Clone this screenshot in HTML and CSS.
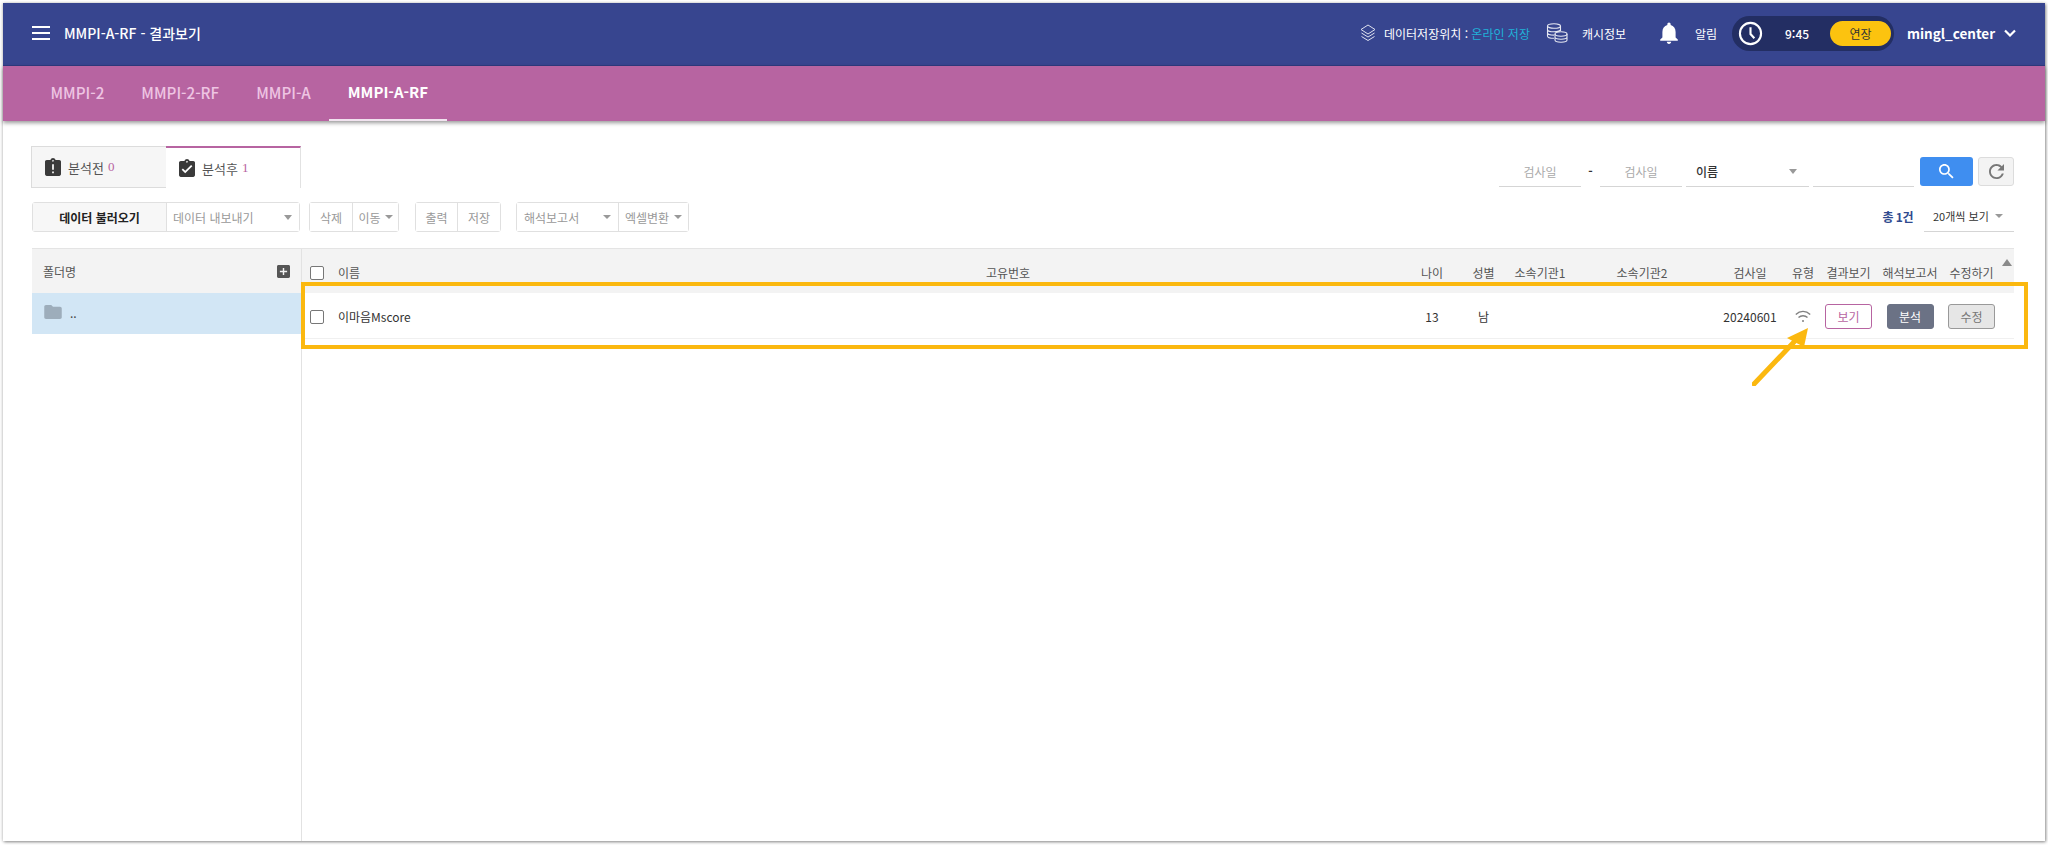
FILE: index.html
```html
<!DOCTYPE html>
<html lang="ko">
<head>
<meta charset="utf-8">
<title>MMPI-A-RF - 결과보기</title>
<link rel="stylesheet" href="styles.css">
</head>
<body>
<div class="app">
  <header class="topbar">
    <div class="brand">
      <span class="burger"><i></i><i></i><i></i></span>
      <span class="title">MMPI-A-RF - 결과보기</span>
    </div>
    <div class="top-actions">
      <svg class="ic-layers" viewBox="0 0 16 18"><path d="M8 1l7 4.500L8 10 1 5.500z M1.500 9L8 13l6.500-4 M1.500 12.500L8 16.500l6.500-4"/></svg>
      <span class="storage">데이터저장위치 : <b>온라인 저장</b></span>
      <svg class="ic-coins" viewBox="0 0 22 20"><ellipse cx="8" cy="3" rx="6.500" ry="2.300"/><path d="M1.500 3v10c0 1.300 2.900 2.300 6.500 2.300M14.500 3v5M1.500 6.400c0 1.300 2.900 2.300 6.500 2.300s6.500-1 6.500-2.300M1.500 9.800c0 1.300 2.900 2.300 6.500 2.300"/><ellipse cx="15" cy="11" rx="6" ry="2.200"/><path d="M9 11v6c0 1.200 2.700 2.200 6 2.200s6-1 6-2.200v-6M9 14c0 1.200 2.700 2.200 6 2.200s6-1 6-2.200"/></svg>
      <span class="cash">캐시정보</span>
      <svg class="ic-bell" viewBox="4 2 16 20"><path d="M12 22c1.100 0 2-.9 2-2h-4c0 1.100.9 2 2 2zm6-6v-5c0-3.070-1.630-5.640-4.500-6.320V4c0-.83-.67-1.500-1.500-1.500s-1.500.67-1.500 1.500v.68C7.640 5.360 6 7.920 6 11v5l-2 2v1h16v-1l-2-2z"/></svg>
      <span class="alarm">알림</span>
      <div class="timer">
        <svg class="ic-clock" viewBox="0 0 26 26"><circle cx="13" cy="13" r="11"/><path d="M13 6.500V13.500l4 4.500"/></svg>
        <span class="time">9:45</span>
        <span class="extend">연장</span>
      </div>
      <span class="user">mingl_center</span>
      <svg class="ic-chevron" viewBox="0 0 12 8"><path d="M1 1.500l5 5 5-5"/></svg>
    </div>
  </header>

  <nav class="subnav">
    <a class="subnav-item">MMPI-2</a>
    <a class="subnav-item">MMPI-2-RF</a>
    <a class="subnav-item">MMPI-A</a>
    <a class="subnav-item is-active">MMPI-A-RF</a>
  </nav>

  <main class="content">
    <div class="row-top">
      <div class="tabs">
        <div class="tab">
          <svg class="tab-ic" viewBox="3 1 18 20"><path d="M19 3h-4.180C14.400 1.840 13.300 1 12 1c-1.300 0-2.400.84-2.820 2H5c-1.100 0-2 .9-2 2v14c0 1.100.9 2 2 2h14c1.100 0 2-.9 2-2V5c0-1.100-.9-2-2-2zm-6 15h-2v-2h2v2zm0-4h-2V8h2v6zm-1-9c-.55 0-1-.45-1-1s.45-1 1-1 1 .45 1 1-.45 1-1 1z"/></svg>
          <span>분석전</span><em>0</em>
        </div>
        <div class="tab is-active">
          <svg class="tab-ic" viewBox="3 1 18 20"><path d="M19 3h-4.180C14.400 1.840 13.300 1 12 1c-1.300 0-2.400.84-2.820 2H5c-1.100 0-2 .9-2 2v14c0 1.100.9 2 2 2h14c1.100 0 2-.9 2-2V5c0-1.100-.9-2-2-2zm-7 0c.55 0 1 .45 1 1s-.45 1-1 1-1-.45-1-1 .45-1 1-1zm-2 14l-4-4 1.410-1.410L10 14.170l6.590-6.590L18 9l-8 8z"/></svg>
          <span>분석후</span><em>1</em>
        </div>
      </div>
      <div class="search">
        <span class="field date">검사일</span>
        <span class="dash">-</span>
        <span class="field date">검사일</span>
        <span class="field select">이름<i class="caret"></i></span>
        <span class="field text"></span>
        <button class="btn-search"><svg viewBox="3 3 18 18"><path d="M15.500 14h-.79l-.28-.27C15.410 12.590 16 11.110 16 9.500 16 5.910 13.090 3 9.500 3S3 5.910 3 9.500 5.910 16 9.500 16c1.610 0 3.090-.59 4.230-1.570l.27.28v.79l5 4.990L20.490 19l-4.990-5zm-6 0C7.010 14 5 11.990 5 9.500S7.010 5 9.500 5 14 7.010 14 9.500 11.990 14 9.500 14z"/></svg></button>
        <button class="btn-refresh"><svg viewBox="4 4 16 16"><path d="M17.650 6.350C16.200 4.900 14.210 4 12 4c-4.420 0-7.990 3.580-7.990 8s3.570 8 7.990 8c3.730 0 6.840-2.550 7.730-6h-2.080c-.82 2.330-3.040 4-5.650 4-3.310 0-6-2.690-6-6s2.690-6 6-6c1.660 0 3.140.69 4.220 1.780L13 11h7V4l-2.350 2.350z"/></svg></button>
      </div>
    </div>

    <div class="row-tools">
      <div class="group g-data">
        <span class="gbtn strong w-load">데이터 불러오기</span>
        <span class="gbtn w-export between">데이터 내보내기<i class="caret"></i></span>
      </div>
      <div class="group g-move">
        <span class="gbtn w-del">삭제</span>
        <span class="gbtn w-move">이동<i class="caret small"></i></span>
      </div>
      <div class="group g-print">
        <span class="gbtn w-print">출력</span>
        <span class="gbtn w-save">저장</span>
      </div>
      <div class="group g-report">
        <span class="gbtn w-report between">해석보고서<i class="caret small"></i></span>
        <span class="gbtn w-excel between">엑셀변환<i class="caret small"></i></span>
      </div>
      <div class="summary">
        <span class="total">총 1건</span>
        <span class="perpage">20개씩 보기<i class="caret small"></i></span>
      </div>
    </div>

    <div class="board">
      <aside class="folders">
        <div class="folders-head"><span>폴더명</span>
          <svg class="ic-add" viewBox="3 3 18 18"><path d="M19 3H5c-1.110 0-2 .9-2 2v14c0 1.100.89 2 2 2h14c1.100 0 2-.9 2-2V5c0-1.100-.9-2-2-2zm-2 10h-4v4h-2v-4H7v-2h4V7h2v4h4v2z"/></svg>
        </div>
        <div class="folder-item">
          <svg class="ic-folder" viewBox="2 4 20 16"><path d="M10 4H4c-1.100 0-1.990.9-1.990 2L2 18c0 1.100.9 2 2 2h16c1.100 0 2-.9 2-2V8c0-1.100-.9-2-2-2h-8l-2-2z"/></svg>
          <span>..</span>
        </div>
      </aside>
      <section class="grid">
        <div class="grid-row grid-head">
          <span class="c-check"><i class="check"></i></span>
          <span class="c-name">이름</span>
          <span>고유번호</span>
          <span></span>
          <span>나이</span>
          <span>성별</span>
          <span>소속기관1</span>
          <span>소속기관2</span>
          <span>검사일</span>
          <span>유형</span>
          <span>결과보기</span>
          <span>해석보고서</span>
          <span>수정하기</span>
          <span class="scroll-up"><i></i></span>
        </div>
        <div class="grid-row grid-body">
          <span class="c-check"><i class="check"></i></span>
          <span class="c-name">이마음Mscore</span>
          <span></span>
          <span></span>
          <span>13</span>
          <span>남</span>
          <span></span>
          <span></span>
          <span>20240601</span>
          <span><svg class="ic-wifi" viewBox="0 0 16 13"><path d="M.8 4.400C5 .4 11 .4 15.200 4.400M3.500 7.500C6 5.200 10 5.200 12.500 7.500"/><circle cx="8" cy="11" r="1"/></svg></span>
          <span><button class="act act-view">보기</button></span>
          <span><button class="act act-analyze">분석</button></span>
          <span><button class="act act-edit">수정</button></span>
          <span></span>
        </div>
      </section>
    </div>
  </main>

  <div class="highlight"></div>
  <svg class="pointer" viewBox="0 0 60 60"><path class="pointer-line" d="M2 58L42 16"/><path class="pointer-head" d="M56 2L35 12L52 21z"/></svg>
</div>
</body>
</html>
```
FILE: styles.css
```css
* { box-sizing: border-box; }
html, body { margin: 0; padding: 0; background: #fff; }
body {
  width: 2048px; height: 845px; overflow: hidden; padding: 3px;
  font-family: "Noto Sans CJK KR", "Noto Sans", sans-serif;
  font-size: 12px; color: #333;
}
i, em { font-style: normal; }
button { font-family: inherit; padding: 0; margin: 0; }

.app {
  position: relative; width: 2042px; height: 838px; background: #fff;
  display: flex; flex-direction: column;
  box-shadow: 1px 1px 3px rgba(0,0,0,.45), -1px 0 3px rgba(0,0,0,.12);
}

.topbar {
  height: 63px; flex: none; background: #37458f; border-bottom: 1px solid #2e3b80;
  display: flex; align-items: center; justify-content: space-between; color: #fff;
  padding: 0 29px 2px 29px;
}
.brand { display: flex; align-items: center; gap: 14px; }
.burger { width: 18px; display: flex; flex-direction: column; gap: 4px; }
.burger i { display: block; height: 2px; background: #fff; }
.title { font-size: 14px; font-weight: 500; }

.top-actions { display: flex; align-items: center; }
.ic-layers { width: 16px; height: 18px; margin-right: 8px; fill: none; stroke: #dfe2f0; stroke-width: 1; }
.storage { width: 162px; }
.storage b { font-weight: 400; color: #1fb2d8; }
.ic-coins { width: 22px; height: 20px; fill: none; stroke: #e6e8f2; stroke-width: 1.100; }
.cash { margin-left: 14px; width: 78px; }
.ic-bell { width: 18px; height: 22px; fill: #fff; }
.alarm { margin-left: 17px; width: 37px; }
.timer {
  width: 162px; height: 35px; border-radius: 18px; background: #232e63;
  display: flex; align-items: center; padding: 0 3px 0 6px;
}
.ic-clock { width: 25px; height: 25px; fill: none; stroke: #fff; stroke-width: 2.200; }
.time { margin-left: 22px; width: 45px; font-weight: 500; }
.extend {
  width: 61px; height: 25px; border-radius: 13px; background: #fcc30f; color: #333;
  display: flex; align-items: center; justify-content: center;
}
.user { margin-left: 13px; font-size: 13.500px; font-weight: 700; width: 97px; }
.ic-chevron { width: 12px; height: 8px; fill: none; stroke: #fff; stroke-width: 2.200; }

.subnav {
  height: 55px; flex: none; background: #b764a1; display: flex; padding-left: 29px; position: relative;
  box-shadow: 0 2px 4px rgba(0,0,0,.4);
}
.subnav-item {
  display: flex; align-items: center; padding: 0 18.500px 2px; font-size: 15.200px; font-weight: 500;
  color: #eec4e3; border-bottom: 2px solid transparent;
}
.subnav-item.is-active { color: #fff; border-bottom-color: #f1e3ef; font-weight: 700; font-size: 15px; }

.content { flex: 1; min-height: 0; display: flex; flex-direction: column; padding: 25px 31px 0 28px; }

.row-top { display: flex; justify-content: space-between; align-items: flex-end; height: 42px; flex: none; }
.tabs { display: flex; height: 42px; }
.tab {
  width: 135px; display: flex; align-items: center; gap: 7px; padding-left: 13px; font-size: 13px;
  background: #f6f6f6; border: 1px solid #dcdcdc; border-right: 0; color: #555;
}
.tab em { color: #b764a1; font-family: "Liberation Serif", serif; margin-left: -3px; }
.tab.is-active { background: #fff; border: 0; border-top: 2px solid #b764a1; border-right: 1px solid #e2e2e2; }
.tab-ic { width: 16px; height: 18px; fill: #3a3a3a; }

.search { display: flex; align-items: flex-end; height: 31px; padding-bottom: 1px; }
.field { height: 30px; border-bottom: 1px solid #d5d5d5; display: flex; align-items: center; }
.date { width: 82px; justify-content: center; color: #aaa; }
.dash { width: 19px; height: 28px; text-align: center; line-height: 28px; color: #333; font-weight: 700; align-self: flex-start; }
.select { width: 123px; margin-left: 4px; padding: 0 12px 0 10px; justify-content: space-between; color: #333; font-weight: 500; }
.text { width: 101px; margin-left: 4px; }
.btn-search { width: 53px; height: 29px; margin-left: 6px; background: #3f8ef0; border: 0; border-radius: 3px; display: flex; align-items: center; justify-content: center; align-self: flex-start; }
.btn-search svg { width: 15px; height: 15px; fill: #fff; }
.btn-refresh { width: 36px; height: 29px; margin-left: 5px; background: #f3f3f3; border: 1px solid #dcdcdc; border-radius: 3px; display: flex; align-items: center; justify-content: center; align-self: flex-start; }
.btn-refresh svg { width: 15px; height: 15px; fill: #777; }

.caret { display: inline-block; width: 0; height: 0; border-left: 4.500px solid transparent; border-right: 4.500px solid transparent; border-top: 5px solid #999; }
.caret.small { border-left-width: 4px; border-right-width: 4px; border-top-width: 4px; }

.row-tools { display: flex; align-items: stretch; height: 30px; margin-top: 14px; flex: none; }
.group { display: flex; border: 1px solid #e0e0e0; border-radius: 3px; background: #fbfbfb; color: #999; }
.g-data { margin-left: 1px; }
.g-move { margin-left: 9px; }
.g-print { margin-left: 16px; }
.g-report { margin-left: 15px; }
.gbtn { display: flex; align-items: center; justify-content: center; gap: 4px; }
.gbtn + .gbtn { border-left: 1px solid #e0e0e0; background: #fff; }
.g-move .gbtn, .g-print .gbtn, .g-report .gbtn { background: #fff; }
.between { justify-content: space-between; padding: 0 7px; }
.strong { font-weight: 700; color: #222; background: #f7f7f7; }
.w-load { width: 133px; }
.w-export { width: 133px; padding: 0 7px 0 6px; }
.w-del { width: 42px; }
.w-move { width: 46px; }
.w-print { width: 41px; }
.w-save { width: 43px; }
.w-report { width: 101px; }
.w-excel { width: 70px; padding: 0 6px; }
.summary { margin-left: auto; display: flex; align-items: stretch; }
.total { font-weight: 700; color: #2f4a8f; letter-spacing: -.5px; display: flex; align-items: center; margin-right: 11px; padding-bottom: 1px; }
.perpage { width: 90px; font-size: 11px; border-bottom: 1px solid #d5d5d5; display: flex; align-items: center; justify-content: space-between; padding: 0 11px 1px 9px; color: #333; }

.board { flex: 1; min-height: 0; display: flex; margin-top: 16px; margin-left: 1px; border-top: 1px solid #e4e4e4; }
.folders { width: 270px; flex: none; border-right: 1px solid #e2e2e2; }
.folders-head { height: 44px; background: #f3f3f3; display: flex; align-items: center; justify-content: space-between; padding: 0 11px 0 11px; color: #555; }
.ic-add { width: 13px; height: 13px; fill: #555; }
.folder-item { height: 41px; background: #d2e6f5; display: flex; align-items: center; gap: 8px; padding: 0 10px 3px 12px; color: #444; }
.ic-folder { width: 18px; height: 14px; fill: #9dadbb; }

.grid { flex: 1; min-width: 0; }
.grid-row {
  display: grid; align-items: center; text-align: center;
  grid-template-columns: 36px 542px 256px 271px 50px 53px 60px 144px 72px 34px 57px 66px 57px 14px;
}
.c-check { display: flex; justify-content: flex-start; padding-left: 8px; }
.c-name { text-align: left; }
.check { display: block; width: 14px; height: 14px; background: #fff; border: 1px solid #777; border-radius: 2px; }
.grid-head { height: 44px; background: #f3f3f3; color: #555; padding-top: 3px; }
.grid-body { height: 46px; border-bottom: 1px solid #f0f0f0; color: #333; padding-top: 2px; }
.scroll-up { align-self: start; }
.scroll-up i { display: block; margin: 7px 0 0 2px; width: 0; height: 0; border-left: 5px solid transparent; border-right: 5px solid transparent; border-bottom: 7px solid #8a8a8a; }
.ic-wifi { display: block; margin: 0 auto; width: 16px; height: 13px; fill: #808080; stroke: #808080; stroke-width: 1.400; }
.ic-wifi path { fill: none; }
.ic-wifi circle { stroke: none; }
.act { width: 47px; height: 25px; border-radius: 3px; font-size: 12px; display: block; margin: 0 auto; }
.act-view { background: #fff; border: 1px solid #b764a1; color: #b764a1; }
.act-analyze { background: #6b7285; border: 1px solid #6b7285; color: #fff; }
.act-edit { background: #e6e6e6; border: 1px solid #999; color: #777; }

.highlight { position: absolute; left: 298px; top: 279px; width: 1727px; height: 67px; border: 4px solid #fbb80f; pointer-events: none; }
.pointer { position: absolute; left: 1749px; top: 323px; width: 60px; height: 60px; }
.pointer-line { fill: none; stroke: #fbb80f; stroke-width: 5; stroke-linecap: round; }
.pointer-head { fill: #fbb80f; }
```
